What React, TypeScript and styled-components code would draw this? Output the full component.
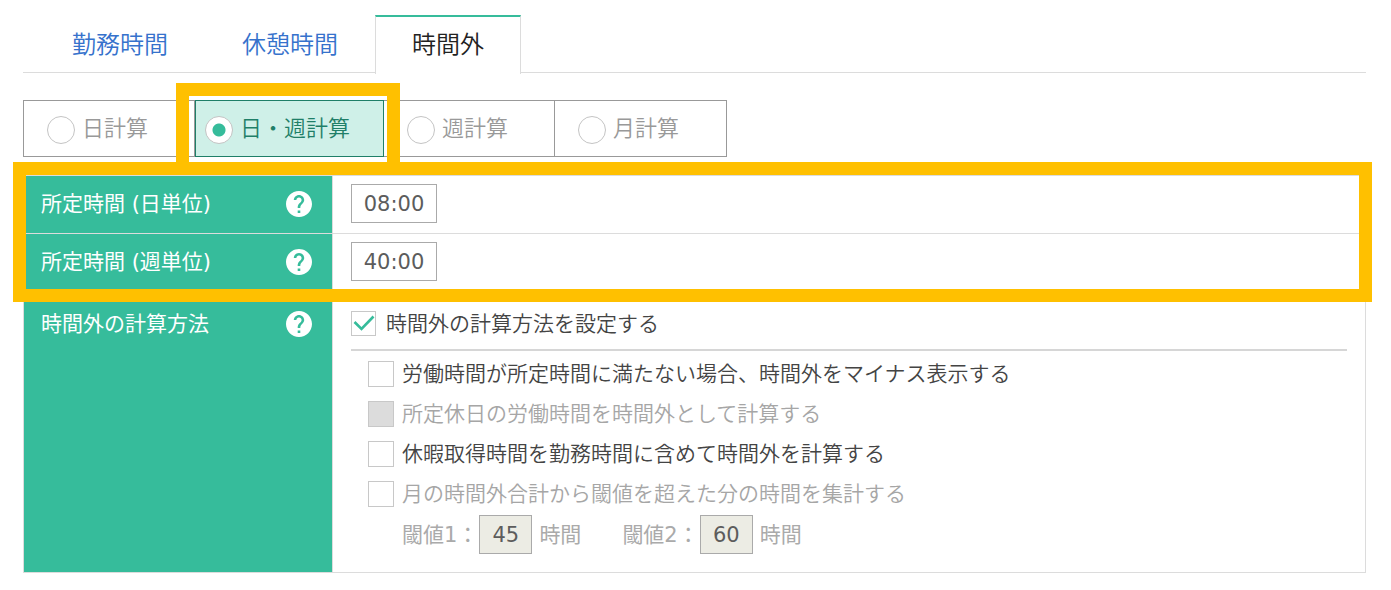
import React, { useState } from "react";
import styled, { createGlobalStyle, css } from "styled-components";

const green = "#36bc9b";
const darkGreen = "#1f7f68";
const line = "#dcdcdc";
const highlight = "#ffc000";

const GlobalStyle = createGlobalStyle`
  *, *::before, *::after { box-sizing: border-box; }
  body {
    margin: 0;
    background: #fff;
    color: #444;
    font-family: "DejaVu Sans", "Noto Sans CJK JP", sans-serif;
    font-size: 21px;
    font-weight: 350;
    line-height: 30px;
  }
  button, input { font: inherit; }
`;

const Page = styled.main`
  padding: 15px 25px 16px 23px;
`;

const TabList = styled.nav`
  display: flex;
  padding-left: 12px;
  border-bottom: 1px solid ${line};
`;

const Tab = styled.a<{ $active?: boolean }>`
  height: 59px;
  margin-bottom: -2px;
  padding: 13px 36px 0;
  border: 1px solid transparent;
  border-top-width: 2px;
  border-bottom: 0;
  font-size: 24px;
  line-height: 30px;
  text-decoration: none;
  color: #3672cc;
  ${(p) =>
    p.$active &&
    css`
      border-color: ${green} ${line} transparent;
      background: #fff;
      color: #222;
    `}
`;

const ModeGroup = styled.div`
  display: flex;
  width: fit-content;
  margin: 27px 0 18px;
  border: 1px solid #999;
`;

const ModeCell = styled.label<{ $selected: boolean; $last?: boolean }>`
  position: relative;
  display: flex;
  align-items: center;
  height: 55px;
  padding: 0 ${(p) => (p.$last ? 47 : 46)}px 0 23px;
  border-right: ${(p) => (p.$last ? "0" : "1px solid #999")};
  font-size: 22px;
  color: #999;
  ${(p) =>
    p.$selected &&
    css`
      z-index: 1;
      height: 57px;
      margin: -1px 0;
      padding: 0 33px 0 9px;
      border: 1px solid ${darkGreen};
      background: #cff0e8;
      color: ${darkGreen};
      &::after {
        content: "";
        position: absolute;
        inset: -18px -17px -19px -20px;
        border: 13px solid ${highlight};
        pointer-events: none;
      }
    `}
`;

const Radio = styled.input`
  appearance: none;
  flex: none;
  width: 28px;
  height: 28px;
  margin: 2px 7px 0 0;
  border: 1px solid #c4c4c4;
  border-radius: 50%;
  background: #fff;
  &:checked {
    background: radial-gradient(circle, ${green} 0 6px, #fff 7px);
  }
`;

const SettingsTable = styled.table`
  width: 100%;
  border-collapse: collapse;
  border: 1px solid ${line};
`;

const HighlightedRows = styled.tbody`
  position: relative;
  &::after {
    content: "";
    position: absolute;
    inset: -14px -6px -9px -11px;
    border: 13px solid ${highlight};
    pointer-events: none;
  }
`;

const HeadCell = styled.th`
  width: 309px;
  padding: 0 20px 0 17px;
  border: 1px solid ${line};
  background: ${green};
  color: #fff;
  font-weight: 400;
  text-align: left;
  vertical-align: top;
`;

const HeadContent = styled.div<{ $low?: boolean }>`
  display: flex;
  align-items: center;
  justify-content: space-between;
  height: 57px;
  padding: ${(p) => (p.$low ? "4px 0 0" : "0 0 2px")};
`;

const HelpButton = styled.button`
  display: flex;
  padding: 0;
  border: 0;
  background: none;
  color: #fff;
`;

const BodyCell = styled.td<{ $top?: boolean }>`
  padding: 0 18px 2px;
  border: 1px solid ${line};
  vertical-align: ${(p) => (p.$top ? "top" : "middle")};
`;

const NumberBox = styled.input<{ $wide?: boolean }>`
  display: block;
  width: ${(p) => (p.$wide ? 86 : 53)}px;
  height: 39px;
  padding: 0;
  border: 1px solid #aaa;
  background: #fff;
  color: #5c5c5c;
  font-weight: 400;
  text-align: center;
  &:disabled {
    background: #ecece4;
  }
`;

const MethodToggle = styled.label`
  display: flex;
  align-items: center;
  gap: 10px;
  height: 58px;
  padding-top: 5px;
  border-bottom: 2px solid #d6d6d6;
`;

const Options = styled.div`
  padding: 3px 0 16px 17px;
`;

const OptionLabel = styled.label<{ $muted?: boolean }>`
  display: flex;
  align-items: center;
  gap: 8px;
  height: 40px;
  color: ${(p) => (p.$muted ? "#a6a6a6" : "#444")};
`;

const CheckWrap = styled.span<{ $size: number }>`
  position: relative;
  flex: none;
  width: ${(p) => p.$size}px;
  height: ${(p) => p.$size}px;
  svg {
    position: absolute;
    inset: 0;
    pointer-events: none;
  }
`;

const CheckInput = styled.input<{ $filled?: boolean }>`
  appearance: none;
  display: block;
  width: 100%;
  height: 100%;
  margin: 0;
  border: 1px solid #c8c8c8;
  background: ${(p) => (p.$filled ? "#dcdcdc" : "#fff")};
`;

const Thresholds = styled.div`
  display: flex;
  gap: 41px;
  margin-top: 1px;
  padding-left: 34px;
  color: #aaa;
  font-weight: 400;
`;

const Threshold = styled.div`
  display: flex;
  align-items: center;
  gap: 7px;
  label {
    margin-right: -6px;
  }
`;

function Help({ topic }: { topic: string }) {
  return (
    <HelpButton type="button" aria-label={`${topic} ヘルプ`}>
      <svg width="26" height="26" viewBox="2 2 20 20" fill="currentColor" aria-hidden="true">
        <path d="M12 2C6.48 2 2 6.48 2 12s4.48 10 10 10 10-4.48 10-10S17.52 2 12 2zm1 17h-2v-2h2v2zm2.07-7.75l-.9.92C13.45 12.9 13 13.5 13 15h-2v-.5c0-1.1.45-2.1 1.17-2.83l1.24-1.26c.37-.36.59-.86.59-1.41 0-1.1-.9-2-2-2s-2 .9-2 2H8c0-2.21 1.79-4 4-4s4 1.79 4 4c0 .88-.36 1.68-.93 2.25z" />
      </svg>
    </HelpButton>
  );
}

function Check({ size = 26, initial = false, ...rest }: { size?: number; initial?: boolean; disabled?: boolean; $filled?: boolean }) {
  const [on, setOn] = useState(initial);
  return (
    <CheckWrap $size={size}>
      <CheckInput type="checkbox" checked={on} onChange={(e) => setOn(e.target.checked)} {...rest} />
      {on && (
        <svg viewBox="0 0 25 25" fill="none" stroke={green} strokeWidth="2.6" aria-hidden="true">
          <path d="M3.5 11 L10.5 18 L22.5 5.5" />
        </svg>
      )}
    </CheckWrap>
  );
}

const tabs = ["勤務時間", "休憩時間", "時間外"];
const modes = ["日計算", "日・週計算", "週計算", "月計算"];
const fixedTimes = [
  { id: "daily", label: "所定時間 (日単位)", value: "08:00" },
  { id: "weekly", label: "所定時間 (週単位)", value: "40:00" },
];
const options = [
  { text: "労働時間が所定時間に満たない場合、時間外をマイナス表示する" },
  { text: "所定休日の労働時間を時間外として計算する", muted: true, filled: true },
  { text: "休暇取得時間を勤務時間に含めて時間外を計算する" },
  { text: "月の時間外合計から閾値を超えた分の時間を集計する", muted: true },
];
const thresholds = [
  { id: "threshold1", label: "閾値1：", value: "45" },
  { id: "threshold2", label: "閾値2：", value: "60" },
];

export default function App() {
  const [mode, setMode] = useState(modes[1]);
  return (
    <>
      <GlobalStyle />
      <Page>
        <TabList>
          {tabs.map((t) => (
            <Tab key={t} href="#" $active={t === "時間外"}>
              {t}
            </Tab>
          ))}
        </TabList>
        <ModeGroup role="radiogroup">
          {modes.map((m, i) => (
            <ModeCell key={m} $selected={m === mode} $last={i === modes.length - 1}>
              <Radio type="radio" name="mode" checked={m === mode} onChange={() => setMode(m)} />
              {m}
            </ModeCell>
          ))}
        </ModeGroup>
        <SettingsTable>
          <HighlightedRows>
            {fixedTimes.map((f) => (
              <tr key={f.id}>
                <HeadCell scope="row">
                  <HeadContent>
                    <label htmlFor={f.id}>{f.label}</label>
                    <Help topic={f.label} />
                  </HeadContent>
                </HeadCell>
                <BodyCell>
                  <NumberBox $wide id={f.id} defaultValue={f.value} />
                </BodyCell>
              </tr>
            ))}
          </HighlightedRows>
          <tbody>
            <tr>
              <HeadCell scope="row">
                <HeadContent $low>
                  時間外の計算方法
                  <Help topic="時間外の計算方法" />
                </HeadContent>
              </HeadCell>
              <BodyCell $top>
                <MethodToggle>
                  <Check size={25} initial />
                  時間外の計算方法を設定する
                </MethodToggle>
                <Options>
                  {options.map((o) => (
                    <OptionLabel key={o.text} $muted={o.muted}>
                      <Check disabled={o.muted} $filled={o.filled} />
                      {o.text}
                    </OptionLabel>
                  ))}
                  <Thresholds>
                    {thresholds.map((t) => (
                      <Threshold key={t.id}>
                        <label htmlFor={t.id}>{t.label}</label>
                        <NumberBox id={t.id} defaultValue={t.value} disabled />
                        <span>時間</span>
                      </Threshold>
                    ))}
                  </Thresholds>
                </Options>
              </BodyCell>
            </tr>
          </tbody>
        </SettingsTable>
      </Page>
    </>
  );
}
